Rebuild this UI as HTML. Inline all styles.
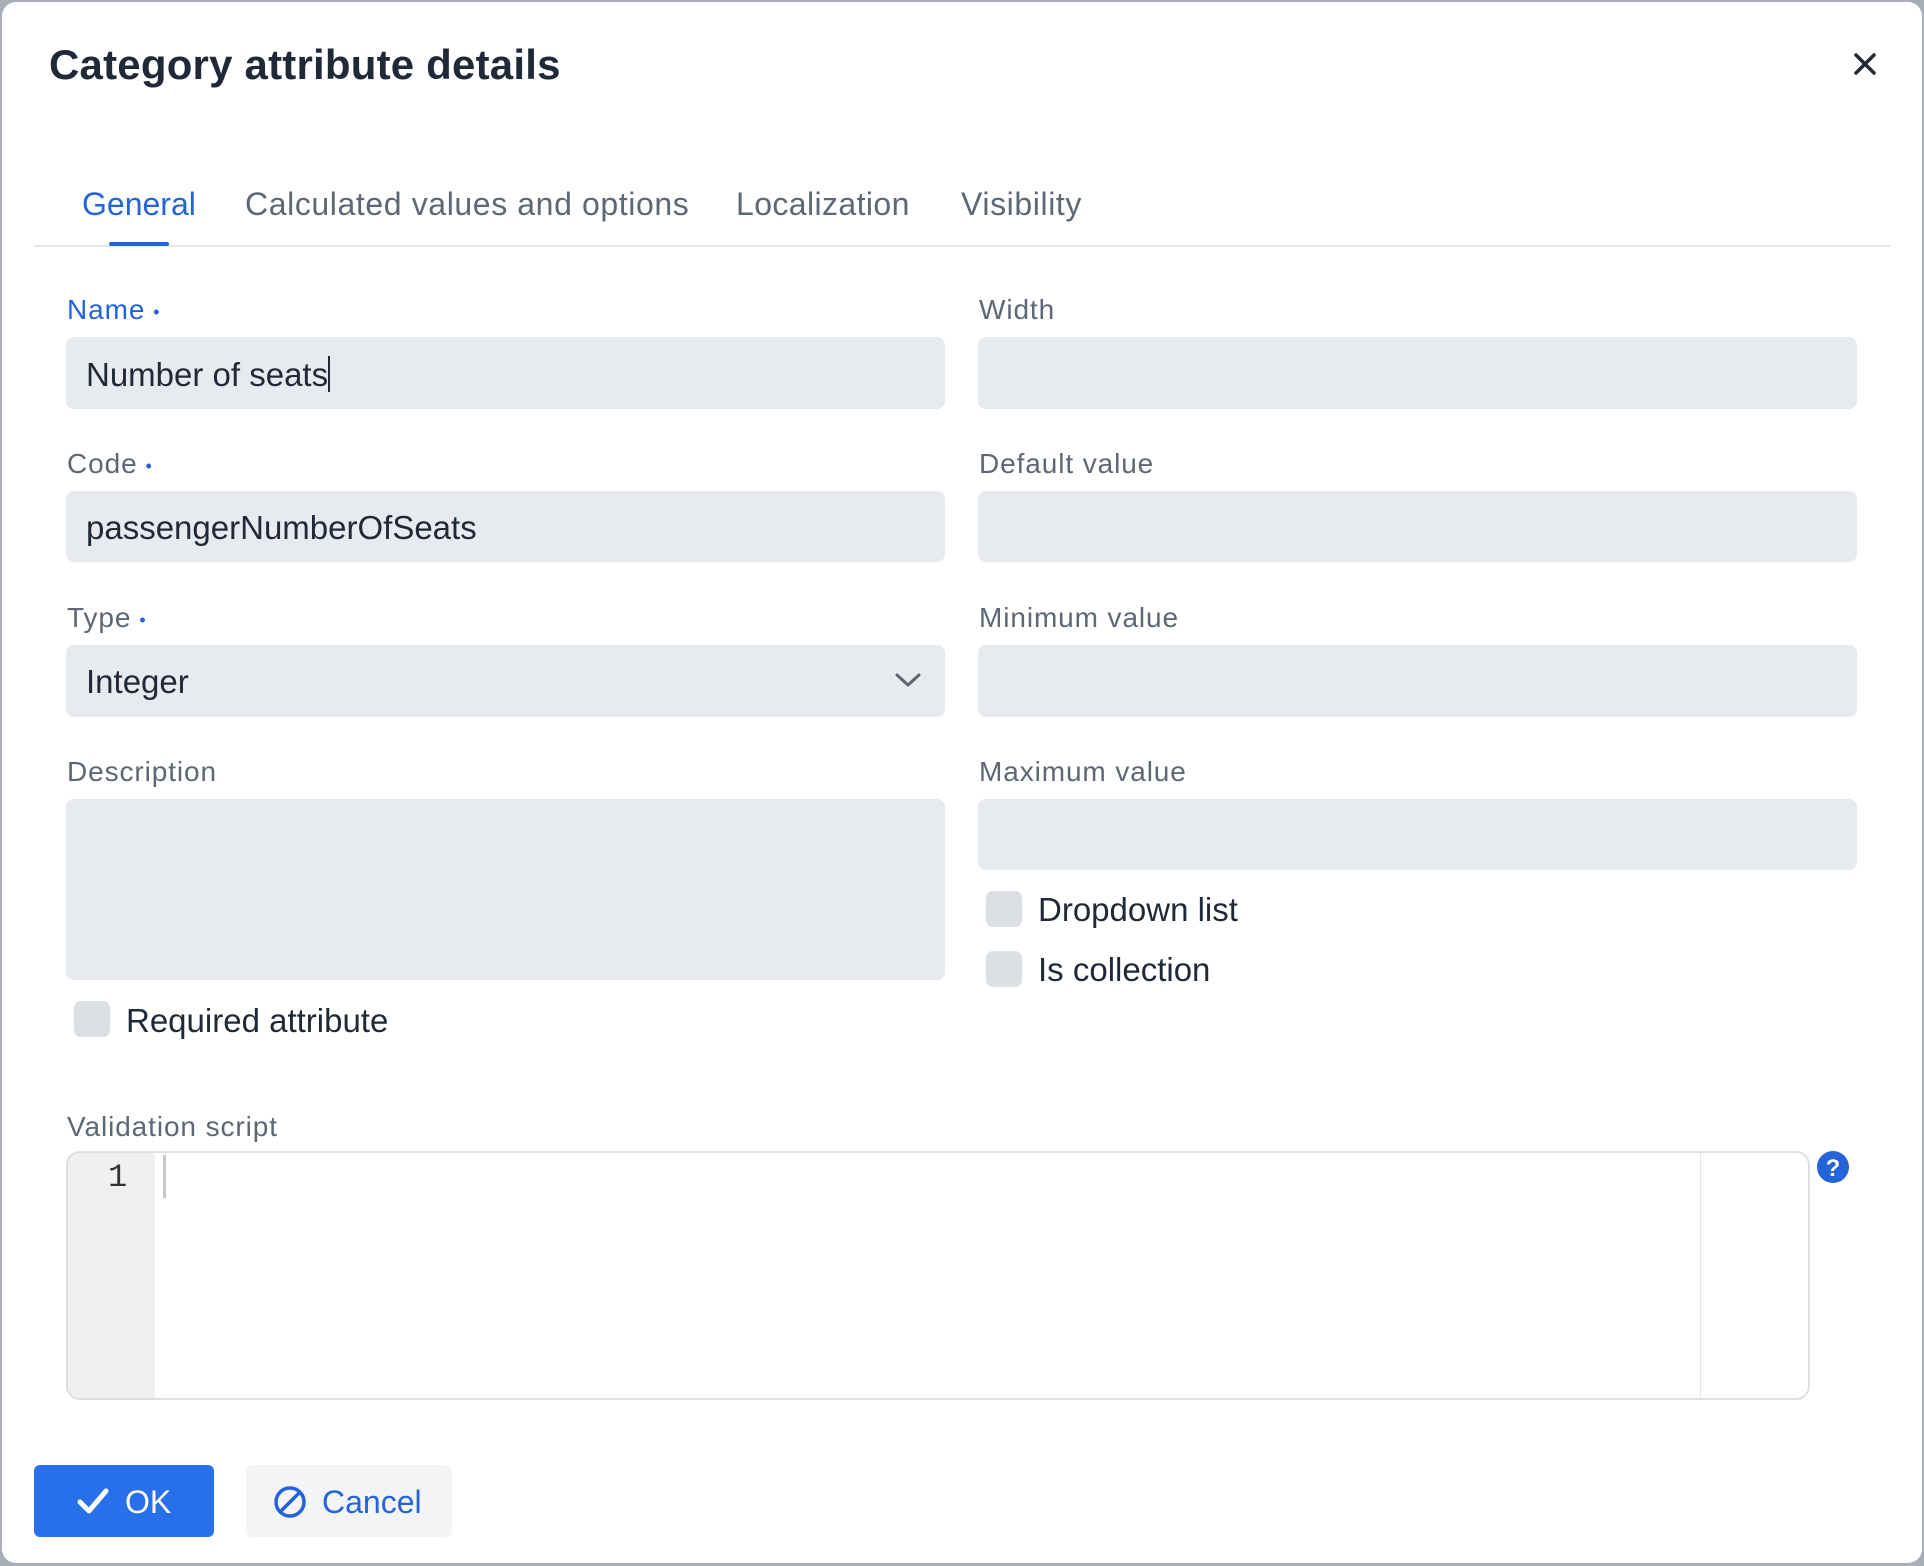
<!DOCTYPE html>
<html><head><meta charset="utf-8"><style>
*{box-sizing:border-box;margin:0;padding:0}
body{width:1924px;height:1566px;background:#a9afb8;font-family:"Liberation Sans",sans-serif;position:relative;overflow:hidden}
.dlg{position:absolute;left:2px;top:2px;width:1920px;height:1561px;background:#fff;border-radius:14px}
.a{position:absolute;white-space:nowrap}
.lbl{font-size:28px;color:#5d6776;line-height:1;letter-spacing:0.9px}
.lbl.act{color:#2563d9}
.dot{font-size:18px;vertical-align:middle;margin-left:8px}
.in{position:absolute;background:#e7eaee;border-radius:8px}
.it{font-size:33px;color:#1f2937;line-height:1}
.cb{position:absolute;width:36px;height:36px;background:#dcdfe4;border-radius:7px}
.tab{font-size:32px;color:#5d6776;line-height:1}
</style></head><body>
<div class="dlg"></div>
<div class="a" style="left:49px;top:44px;font-size:42px;font-weight:bold;color:#1f2937;line-height:1;letter-spacing:0.2px">Category attribute details</div>
<svg class="a" style="left:1853px;top:52px" width="24" height="24" viewBox="0 0 24 24"><path d="M3 3L21 21M21 3L3 21" stroke="#1f2937" stroke-width="3.5" stroke-linecap="round"/></svg>

<div class="a tab" style="left:82px;top:188px;color:#2563d9">General</div>
<div class="a tab" style="left:245px;top:188px;letter-spacing:0.6px">Calculated values and options</div>
<div class="a tab" style="left:736px;top:188px;letter-spacing:0.4px">Localization</div>
<div class="a tab" style="left:961px;top:188px;letter-spacing:0.6px">Visibility</div>
<div class="a" style="left:34px;top:245px;width:1856px;height:2px;background:#e6e9ed"></div>
<div class="a" style="left:109px;top:242px;width:60px;height:4px;background:#2563d9;border-radius:2px"></div>

<div class="a lbl act" style="left:67px;top:296px">Name<span class="dot">•</span></div>
<div class="in" style="left:66px;top:337px;width:879px;height:72px"></div>
<div class="a it" style="left:86px;top:356px">Number of seats<span style="display:inline-block;width:2px;height:36px;background:#1f2937;vertical-align:-6px"></span></div>

<div class="a lbl act" style="left:67px;top:450px;color:#5d6776">Code<span class="dot" style="color:#2563d9">•</span></div>
<div class="in" style="left:66px;top:491px;width:879px;height:71px"></div>
<div class="a it" style="left:86px;top:511px">passengerNumberOfSeats</div>

<div class="a lbl" style="left:67px;top:604px">Type<span class="dot" style="color:#2563d9">•</span></div>
<div class="in" style="left:66px;top:645px;width:879px;height:72px"></div>
<div class="a it" style="left:86px;top:665px">Integer</div>
<svg class="a" style="left:895px;top:672px" width="26" height="16" viewBox="0 0 26 16"><path d="M2 3L13 13L24 3" stroke="#5d6776" stroke-width="3" fill="none" stroke-linecap="round" stroke-linejoin="round"/></svg>

<div class="a lbl" style="left:67px;top:758px">Description</div>
<div class="in" style="left:66px;top:799px;width:879px;height:181px"></div>
<div class="cb" style="left:74px;top:1001px"></div>
<div class="a it" style="left:126px;top:1004px">Required attribute</div>

<div class="a lbl" style="left:979px;top:296px">Width</div>
<div class="in" style="left:978px;top:337px;width:879px;height:72px"></div>
<div class="a lbl" style="left:979px;top:450px">Default value</div>
<div class="in" style="left:978px;top:491px;width:879px;height:71px"></div>
<div class="a lbl" style="left:979px;top:604px">Minimum value</div>
<div class="in" style="left:978px;top:645px;width:879px;height:72px"></div>
<div class="a lbl" style="left:979px;top:758px">Maximum value</div>
<div class="in" style="left:978px;top:799px;width:879px;height:71px"></div>
<div class="cb" style="left:986px;top:891px"></div>
<div class="a it" style="left:1038px;top:893px">Dropdown list</div>
<div class="cb" style="left:986px;top:951px"></div>
<div class="a it" style="left:1038px;top:953px">Is collection</div>

<div class="a lbl" style="left:67px;top:1113px">Validation script</div>
<div class="a" style="left:66px;top:1151px;width:1744px;height:249px;border:2px solid #dcdfe4;border-radius:14px;overflow:hidden;background:#fff">
  <div style="position:absolute;left:0;top:0;width:87px;height:100%;background:#f0f0f0"></div>
  <div style="position:absolute;left:1632px;top:0;width:1px;height:100%;background:#e6e6e6"></div>
  <div style="position:absolute;left:40px;top:6px;font-family:'Liberation Mono',monospace;font-size:32px;color:#333">1</div>
  <div style="position:absolute;left:95px;top:2px;width:3px;height:43px;background:#c8c8c8"></div>
</div>
<svg class="a" style="left:1817px;top:1151px" width="32" height="32" viewBox="0 0 32 32"><circle cx="16" cy="16" r="16" fill="#2563d9"/><text x="16" y="25" text-anchor="middle" font-family="Liberation Sans" font-weight="bold" font-size="24" fill="#fff">?</text></svg>

<div class="a" style="left:34px;top:1465px;width:180px;height:72px;background:#2870ea;border-radius:6px"></div>
<svg class="a" style="left:77px;top:1487px" width="32" height="28" viewBox="0 0 32 28"><path d="M3 15L12 24L29 4" stroke="#fff" stroke-width="5" fill="none" stroke-linecap="round" stroke-linejoin="round"/></svg>
<div class="a" style="left:125px;top:1486px;font-size:32px;color:#fff;line-height:1">OK</div>
<div class="a" style="left:246px;top:1465px;width:206px;height:72px;background:#f3f4f6;border-radius:6px"></div>
<svg class="a" style="left:273px;top:1485px" width="34" height="34" viewBox="0 0 34 34"><circle cx="17" cy="17" r="14" stroke="#2563d9" stroke-width="3.5" fill="none"/><path d="M7 27L27 7" stroke="#2563d9" stroke-width="3.5"/></svg>
<div class="a" style="left:322px;top:1486px;font-size:32px;color:#2563d9;line-height:1">Cancel</div>
</body></html>
